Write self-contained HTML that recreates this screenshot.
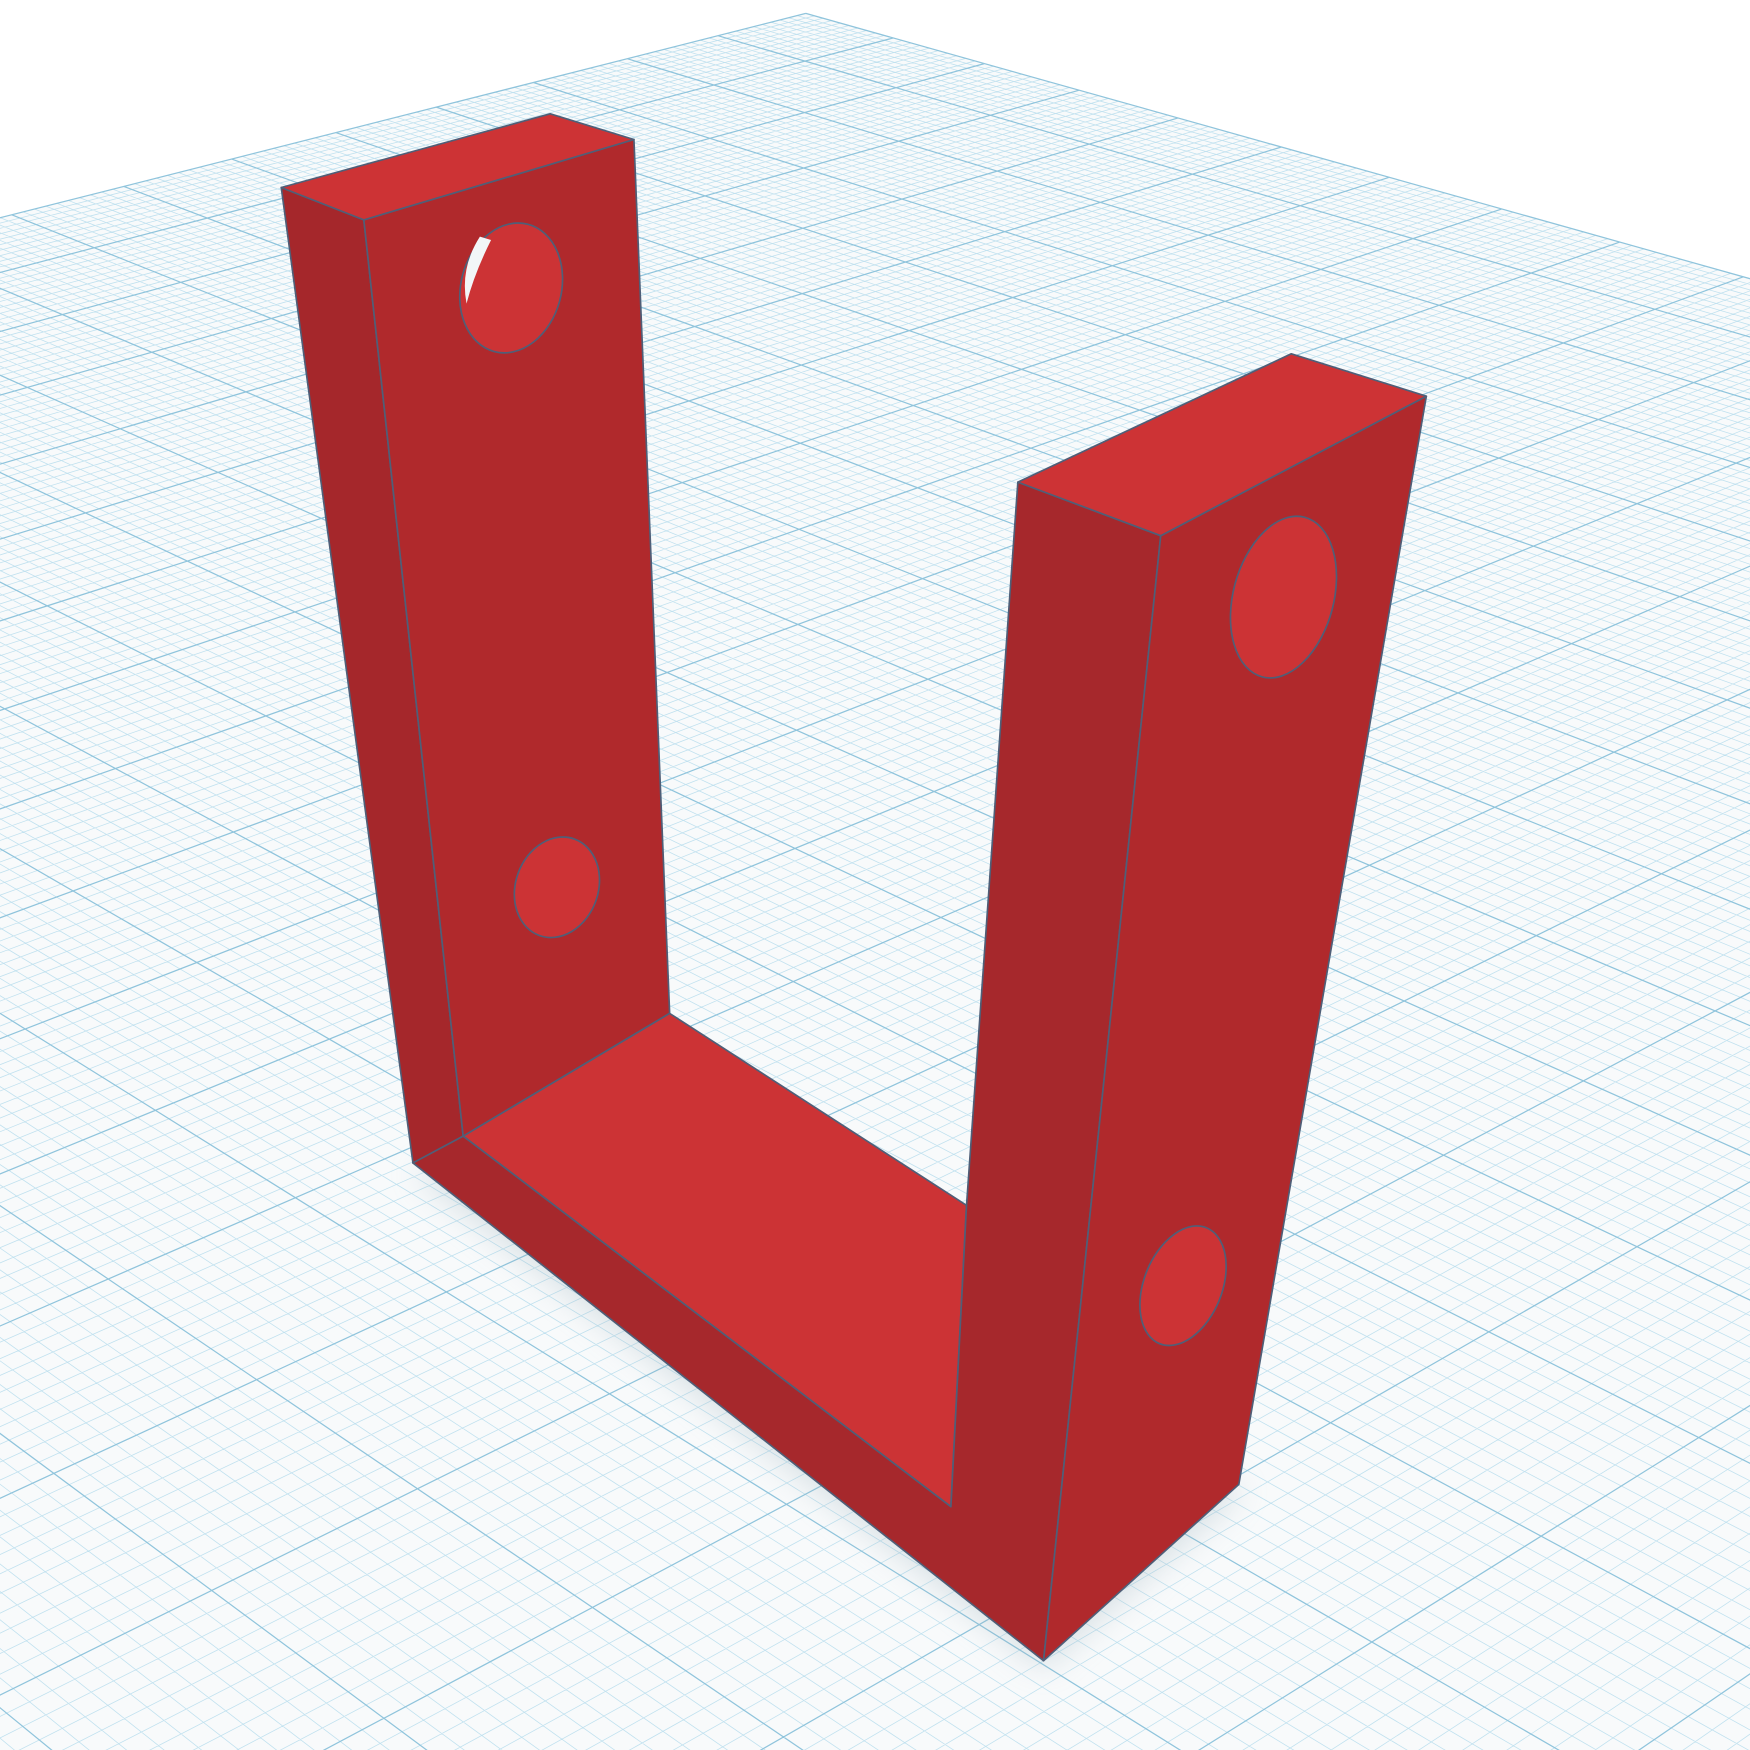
<!DOCTYPE html>
<html><head><meta charset="utf-8"><style>html,body{margin:0;padding:0;background:#fff;width:1750px;height:1750px;overflow:hidden}svg{display:block;overflow:hidden}</style></head>
<body>
<svg id="s" width="1750" height="1750" viewBox="0 0 1568 1568" xmlns="http://www.w3.org/2000/svg">
<defs>
<filter id="blur"><feGaussianBlur stdDeviation="14"/></filter>
<clipPath id="vp"><rect width="1568" height="1568"/></clipPath>
</defs>
<polygon points="722,12 1568,250 1568,1568 0,1568 0,195" fill="#f8fafb"/>
<g clip-path="url(#vp)">
<g id="minor" stroke="#c0e1ef" stroke-width="0.7" fill="none"></g>
<g id="major" stroke="#8fc4dc" stroke-width="1.1" fill="none"></g>
</g>
<polygon points="370,1050 935,1495 1115,1335 1000,1300 600,1000" fill="#9ab0bb" opacity="0.35" filter="url(#blur)"/>
<g stroke="#4f5f78" stroke-width="1.5" stroke-linejoin="round">
<polygon points="252,168 326,197 415,1018 370,1042" fill="#a5272b"/>
<polygon points="326,197 568,125 600,908 415,1018" fill="#b0292c"/>
<polygon points="252,168 493,102 568,125 326,197" fill="#cd3335"/>
<polygon points="415,1018 600,908 866,1080 852,1350" fill="#cc3335"/>
<polygon points="370,1042 415,1018 852,1350 866,1080 912,432 1040,480 935,1488" fill="#a6282c"/>
<polygon points="1040,480 1278,355 1110,1330 935,1488" fill="#b0292c"/>
<polygon points="912,432 1157,317 1278,355 1040,480" fill="#cd3335"/>
<ellipse cx="458" cy="258" rx="45" ry="59" transform="rotate(15 458 258)" fill="#cc3335"/>
<ellipse cx="499" cy="795" rx="37" ry="46" transform="rotate(20 499 795)" fill="#cc3335"/>
<ellipse cx="1150" cy="535" rx="45" ry="74" transform="rotate(15 1150 535)" fill="#cc3335"/>
<ellipse cx="1060" cy="1152" rx="35" ry="56" transform="rotate(22 1060 1152)" fill="#cc3335"/>
</g>
<path d="M430 212 Q412 240 418 272 Q425 245 440 215 Z" fill="#f2f6f8"/>
</svg>
<script>
(function(){
var O=[722,12],VB=[-3200,-1090],VA=[5500,-1200],a=0.00196,b=0.00162,WMIN=0.3;
function P(u,v){var w=1-a*u-b*v;return[(O[0]-a*u*VB[0]-b*v*VA[0])/w,(O[1]-a*u*VB[1]-b*v*VA[1])/w];}
var dm='',dM='';
var U=Math.floor((1-WMIN)/a),V=Math.floor((1-WMIN)/b);
function seg(p,q){return 'M'+p[0].toFixed(1)+' '+p[1].toFixed(1)+'L'+q[0].toFixed(1)+' '+q[1].toFixed(1);}
for(var i=0;i<=U;i++){
  var vmax=(1-WMIN-a*i)/b; if(vmax<0)continue;
  var s=seg(P(i,0),P(i,vmax));
  if(i%10==0)dM+=s;else dm+=s;
}
for(var j=0;j<=V;j++){
  var umax=(1-WMIN-b*j)/a; if(umax<0)continue;
  var s=seg(P(0,j),P(umax,j));
  if(j%10==0)dM+=s;else dm+=s;
}
var NS='http://www.w3.org/2000/svg';
var e1=document.createElementNS(NS,'path');e1.setAttribute('d',dm);document.getElementById('minor').appendChild(e1);
var e2=document.createElementNS(NS,'path');e2.setAttribute('d',dM);document.getElementById('major').appendChild(e2);
})();
</script>
</body></html>
